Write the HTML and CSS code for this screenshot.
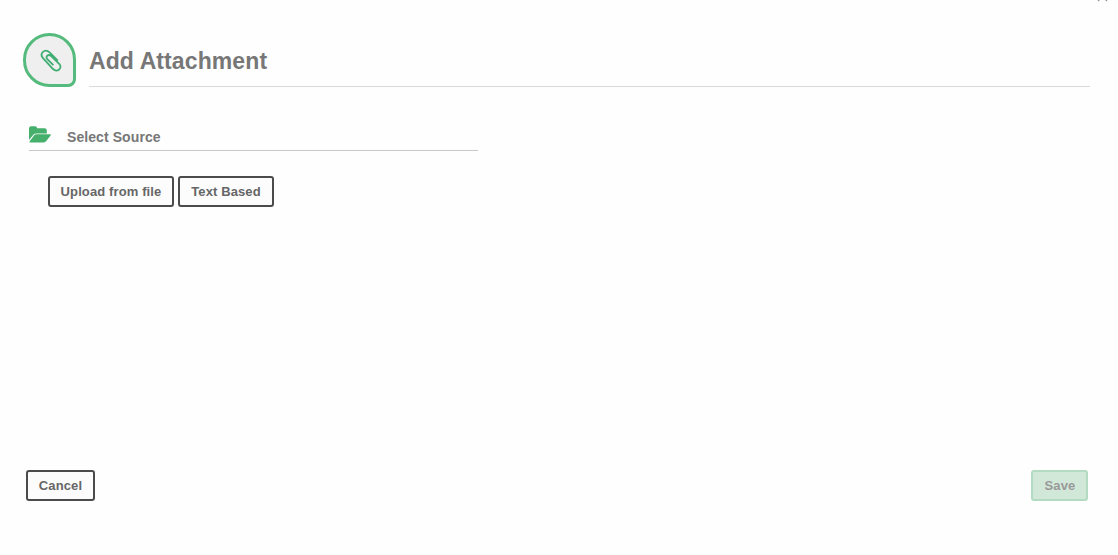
FILE: index.html
```
<!DOCTYPE html>
<html lang="en">
	<head>
		<meta charset="utf-8">
		<title>Add Attachment</title>
		<link rel="stylesheet" href="styles.css">
	</head>
	<body>
		<div class="dialog">
			<svg class="close" viewBox="0 0 11 11"><path d="M1 1L10 10M10 1L1 10"/></svg>
			<div class="header">
				<div class="badge">
					<svg class="clip" viewBox="0 0 22 24"><path d="M17.8 12.6L9.6 4.4C4.8 0-1 5.4 3 10.2L13 21C17.4 24.9 22.8 20 19.4 16L11.2 8C8.2 5.6 5 8.7 7.3 11.2L13.4 17.2"/></svg>
				</div>
				<h1 class="title">Add Attachment</h1>
			</div>
			<div class="section">
				<svg class="folder" viewBox="0 0 22 17"><path d="M0 14V2.5Q0 0.3 2.2 0.3H6Q8 0.3 8.2 2.3H15.4Q17.8 2.3 17.8 4.6V7.4H7.3Q5.5 7.4 4.3 8.8Z"/><path d="M0.7 15.2L5 9.6Q5.9 8.3 7.5 8.3H21.2Q22.3 8.3 21.6 9.5L17.5 14.8Q16.3 16.6 14.5 16.6H1.2Q0 16.6 0.7 15.2Z"/></svg>
				<h2 class="label">Select Source</h2>
			</div>
			<div class="sources">
				<button class="btn upload">Upload from file</button>
				<button class="btn text">Text Based</button>
			</div>
			<div class="footer">
				<button class="btn cancel">Cancel</button>
				<button class="btn save" disabled>Save</button>
			</div>
		</div>
	</body>
</html>
```
FILE: styles.css
```
body{
	margin: 0;
	font-family: "Liberation Sans", Arial, sans-serif;
	background-color: #fefefe;
	overflow: hidden;
}
.dialog{
	box-sizing: border-box;
	position: relative;
	display: flex;
	flex-direction: column;
	height: 555px;
	padding: 33px 28px 54px 23px;
}
/* close icon sits on the top edge of the dialog */
.close{
	position: absolute;
	top: -9px;
	right: 10px;
	width: 11px;
	height: 11px;
	fill: none;
	stroke: #999;
	stroke-width: 1.4;
}
.header{
	display: flex;
	height: 54px;
	gap: 13px;
}
.badge{
	box-sizing: border-box;
	display: flex;
	align-items: center;
	justify-content: center;
	width: 53px;
	height: 54px;
	border: 3px solid #55bb7d;
	border-radius: 27px 27px 8px 27px;
	background-color: #efefef;
}
.clip{
	width: 22px;
	height: 24px;
	margin: 0 0 1px 3px;
	fill: none;
	stroke: #3fae72;
	stroke-width: 1.8;
}
.title{
	box-sizing: border-box;
	flex: 1;
	height: 54px;
	margin: 0;
	padding-top: 14px;
	border-bottom: 1px solid #dadada;
	color: #777;
	font-size: 23px;
	line-height: 28px;
	letter-spacing: 0.1px;
}
.section{
	box-sizing: border-box;
	display: flex;
	width: 449px;
	height: 25px;
	margin: 39px 0 0 6px;
	border-bottom: 1px solid #c8c8c8;
}
.folder{
	width: 22px;
	height: 17px;
	fill: #45af6b;
}
.label{
	margin: 3px 0 0 16px;
	color: #777;
	font-size: 14px;
	line-height: 16px;
	letter-spacing: 0.08px;
}
.sources{
	display: flex;
	gap: 4px;
	margin: 25px 0 0 25px;
}
.btn{
	box-sizing: border-box;
	height: 31px;
	padding: 0;
	border: 2px solid #4b4b4b;
	border-radius: 3px;
	background-color: #fcfcfc;
	color: #666;
	font-family: inherit;
	font-size: 13px;
	font-weight: bold;
	letter-spacing: 0.12px;
}
.upload{
	width: 126px;
}
.text{
	width: 96px;
}
.footer{
	display: flex;
	justify-content: space-between;
	margin: auto 2px 0 3px;
}
.cancel{
	width: 69px;
}
.save{
	width: 57px;
	padding-left: 1px;
	border-color: #b3dbc1;
	background-color: #d1e8d9;
	color: #999;
}
```
